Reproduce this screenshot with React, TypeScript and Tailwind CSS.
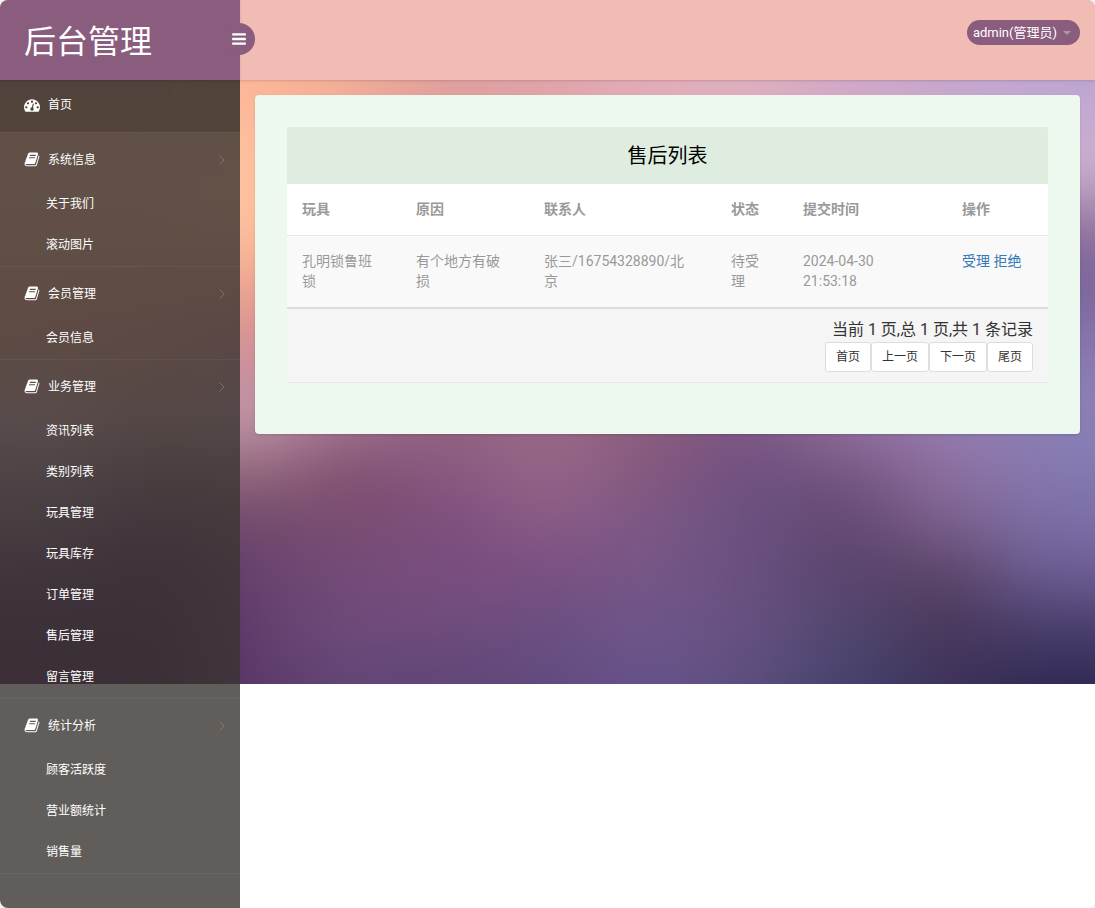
import { FC } from "react";

interface MenuGroup {
  title: string;
  items: string[];
}

const MENU: MenuGroup[] = [
  { title: "系统信息", items: ["关于我们", "滚动图片"] },
  { title: "会员管理", items: ["会员信息"] },
  {
    title: "业务管理",
    items: ["资讯列表", "类别列表", "玩具管理", "玩具库存", "订单管理", "售后管理", "留言管理"],
  },
  { title: "统计分析", items: ["顾客活跃度", "营业额统计", "销售量"] },
];

const COLUMNS = [
  { label: "玩具", width: "w-[114px]" },
  { label: "原因", width: "w-[128px]" },
  { label: "联系人", width: "w-[187px]" },
  { label: "状态", width: "w-[72px]" },
  { label: "提交时间", width: "w-[159px]" },
  { label: "操作", width: "w-[101px]" },
];

const ROWS = [
  {
    toy: "孔明锁鲁班锁",
    reason: "有个地方有破损",
    contact: "张三/16754328890/北京",
    status: "待受理",
    time: "2024-04-30 21:53:18",
  },
];

// colour mesh of the backdrop, 100x50 cells, first row starts at y=50
const MESH = [
  ["#fab496", "#fab496", "#fcb496", "#f2ad96", "#de9e9e", "#e0a4a8", "#e2acb8", "#deafbe", "#d2a8c6", "#c6a6cc", "#bca4d2"],
  ["#fdbca0", "#fdbca0", "#ffbe9c", "#f2ad96", "#de9e9e", "#e0a4a8", "#e2acb8", "#deafbe", "#d2a8c6", "#c8aacc", "#c6acd0"],
  ["#fdbca0", "#fdbca0", "#ffc39e", "#fcb496", "#de9e9e", "#d8a0a8", "#d8a0b0", "#d0a0b8", "#c6a0c0", "#c8aacc", "#c8aecd"],
  ["#fdbca0", "#fdbca0", "#ffc39e", "#f0ac98", "#d0989c", "#c8949c", "#c090a8", "#b890b0", "#b090b8", "#b090b8", "#96789f"],
  ["#f8b498", "#f5b098", "#f4ac92", "#e0a090", "#c89098", "#b88898", "#b088a0", "#a888a8", "#a088b0", "#9080a8", "#7a649a"],
  ["#eca090", "#e89c8c", "#dc9490", "#c89090", "#b88090", "#a87890", "#a07898", "#9878a0", "#9880a8", "#9080b0", "#8470a8"],
  ["#e0a498", "#d89890", "#c890a4", "#b08098", "#a07090", "#a07088", "#907090", "#887098", "#987aa8", "#9478b0", "#8a7db2"],
  ["#d4acc0", "#b89098", "#c098a8", "#a07090", "#905f80", "#9a6a84", "#8c5c7c", "#7c5482", "#94709e", "#967cb0", "#8a80b6"],
  ["#a08098", "#88607a", "#94687c", "#80506f", "#885a80", "#96668a", "#84587f", "#6e5080", "#745480", "#8f6f9f", "#8478b0"],
  ["#7e6080", "#684070", "#704b6c", "#7a4c72", "#7c4d7c", "#8a5a86", "#7c5884", "#6a5080", "#62486f", "#7c608c", "#7c6ea6"],
  ["#603868", "#502860", "#67436c", "#744b78", "#784e7e", "#7a5082", "#765686", "#6a5080", "#58446e", "#5c4466", "#6c5e96"],
  ["#4c245c", "#46205a", "#633f6c", "#6f4b7a", "#704c7c", "#6c4e80", "#70568a", "#665080", "#52466e", "#49385a", "#4c406e"],
  ["#441c50", "#441c50", "#5c3a6a", "#654778", "#624678", "#644c80", "#68548c", "#60507e", "#48446e", "#42345a", "#362e5a"],
  ["#441c50", "#441c50", "#5a3868", "#5e4474", "#5e4474", "#5e4678", "#625086", "#564a7c", "#3c3c70", "#382e58", "#262048"],
];

const Backdrop: FC = () => (
  <svg
    className="absolute top-0 left-0 w-full"
    viewBox="0 0 1100 687"
    preserveAspectRatio="none"
    aria-hidden="true"
  >
    <defs>
      <filter id="soften" filterUnits="userSpaceOnUse" x="-100" y="0" width="1300" height="850" colorInterpolationFilters="sRGB">
        <feGaussianBlur stdDeviation="42 26" />
      </filter>
    </defs>
    <g filter="url(#soften)">
      {MESH.map((row, r) => {
        const first = r === 0;
        const last = r === MESH.length - 1;
        return row.map((color, c) => (
          <rect
            key={`${r}-${c}`}
            x={c === 0 ? -200 : c * 100}
            y={first ? -100 : 50 + r * 50}
            width={c === 0 || c === row.length - 1 ? 301 : 101}
            height={first ? 201 : last ? 250 : 51}
            fill={color}
          />
        ));
      })}
    </g>
  </svg>
);

const DashboardIcon: FC = () => (
  <svg className="size-4 shrink-0" viewBox="0 0 1792 1792" fill="currentColor" aria-hidden="true">
    <path d="M384 1152q0-53-37.5-90.5t-90.5-37.5-90.5 37.5-37.5 90.5 37.5 90.5 90.5 37.5 90.5-37.5 37.5-90.5zm192-448q0-53-37.5-90.5t-90.5-37.5-90.5 37.5-37.5 90.5 37.5 90.5 90.5 37.5 90.5-37.5 37.5-90.5zm428 481l101-382q6-26-7.5-48.5t-38.5-29.5-48 6.5-30 39.5l-101 382q-60 5-107 43.5t-63 98.5q-20 77 20 146t117 89 146-20 89-117q16-60-6-117t-72-91zm660-33q0-53-37.5-90.5t-90.5-37.5-90.5 37.5-37.5 90.5 37.5 90.5 90.5 37.5 90.5-37.5 37.5-90.5zm-640-640q0-53-37.5-90.5t-90.5-37.5-90.5 37.5-37.5 90.5 37.5 90.5 90.5 37.5 90.5-37.5 37.5-90.5zm448 192q0-53-37.5-90.5t-90.5-37.5-90.5 37.5-37.5 90.5 37.5 90.5 90.5 37.5 90.5-37.5 37.5-90.5zm320 448q0 261-141 483-19 29-54 29h-1402q-35 0-54-29-141-221-141-483 0-182 71-348t191-286 286-191 348-71 348 71 286 191 191 286 71 348z" />
  </svg>
);

const BookIcon: FC = () => (
  <svg className="size-4 shrink-0" viewBox="0 64 1792 1792" fill="currentColor" aria-hidden="true">
    <path d="M1703 478q40 57 18 129l-275 906q-19 64-76.5 107.5t-122.5 43.5h-923q-77 0-148.5-53.5t-99.5-131.5q-24-67-2-127 0-4 3-27t4-37q1-8-3-21.5t-3-19.5q2-11 8-21t16.5-23.5 16.5-23.5q23-38 45-91.5t30-91.5q3-10 .5-30t-.5-28q3-11 17-28t17-23q21-36 42-92t25-90q1-9-2.5-32t.5-28q4-13 22-30.5t22-22.5q19-26 42.5-84.5t27.5-96.5q1-8-3-25.5t-2-26.5q2-8 9-18t18-23 17-21q8-12 16.5-30.5t15-35 16-36 19.5-32 26.5-23.5 36-11.5 47.5 5.5l-1 3q38-9 51-9h761q74 0 114 56t18 130l-274 906q-36 119-71.5 153.5t-128.5 34.5h-869q-27 0-38 15-11 16-1 43 24 70 144 70h923q29 0 56-15.5t35-41.5l300-987q7-22 5-57 38 15 59 43zm-1064 2q-4 13 2 22.5t20 9.5h608q13 0 25.5-9.5t16.5-22.5l21-64q4-13-2-22.5t-20-9.5h-608q-13 0-25.5 9.5t-16.5 22.5zm-83 256q-4 13 2 22.5t20 9.5h608q13 0 25.5-9.5t16.5-22.5l21-64q4-13-2-22.5t-20-9.5h-608q-13 0-25.5 9.5t-16.5 22.5z" />
  </svg>
);

const BarsIcon: FC = () => (
  <svg className="size-4" viewBox="0 0 1792 1792" fill="currentColor" aria-hidden="true">
    <path d="M1664 1344v128q0 26-19 45t-45 19h-1408q-26 0-45-19t-19-45v-128q0-26 19-45t45-19h1408q26 0 45 19t19 45zm0-512v128q0 26-19 45t-45 19h-1408q-26 0-45-19t-19-45v-128q0-26 19-45t45-19h1408q26 0 45 19t19 45zm0-512v128q0 26-19 45t-45 19h-1408q-26 0-45-19t-19-45v-128q0-26 19-45t45-19h1408q26 0 45 19t19 45z" />
  </svg>
);

const Sidebar: FC = () => (
  <nav className="flex-1 bg-[#393431]/80 text-xs text-white">
    <a href="#" className="flex h-[53px] items-center gap-2 border-b border-white/10 bg-black/15 pb-[3px] pl-6">
      <DashboardIcon />
      首页
    </a>
    {MENU.map((group) => (
      <section key={group.title} className="border-b border-white/5">
        <button className="flex h-[51px] w-full items-center gap-2 pt-[3px] pr-[14px] pl-6">
          <BookIcon />
          <span>{group.title}</span>
          <svg
            className="ml-auto h-3 w-2 text-[#8c827c]"
            viewBox="0 0 8 12"
            fill="none"
            stroke="currentColor"
            strokeWidth="0.7"
            aria-hidden="true"
          >
            <path d="M1.5 1.5 6 6 1.5 10.5" />
          </svg>
        </button>
        <ul>
          {group.items.map((item) => (
            <li key={item}>
              <a href="#" className="flex h-[41px] items-center pb-px pl-[46px]">
                {item}
              </a>
            </li>
          ))}
        </ul>
      </section>
    ))}
  </nav>
);

const Pager: FC = () => (
  <div className="flex flex-col items-end border-t-2 border-b border-[#dddddd] border-b-[#e4e9e4] bg-[#f5f5f5] px-[15px] py-[10px] text-[#333333]">
    <p className="mb-0.5 text-base leading-[21px]">当前 1 页,总 1 页,共 1 条记录</p>
    <div className="flex">
      {["首页", "上一页", "下一页", "尾页"].map((label) => (
        <button key={label} className="h-[30px] rounded-[3px] border border-[#dddddd] bg-white px-[10px] text-xs">
          {label}
        </button>
      ))}
    </div>
  </div>
);

const App: FC = () => {
  return (
    <div className="bg-gray-100 font-['Roboto','Noto_Sans_CJK_SC',sans-serif]">
      <div className="relative isolate flex min-h-screen overflow-hidden rounded-lg bg-white">
        <div className="absolute inset-0 -z-10">
          <Backdrop />
        </div>

        <aside className="z-10 flex w-60 shrink-0 flex-col">
          <div className="relative flex h-20 items-center bg-[#8a5c7d] pt-1 pl-6 shadow-sm">
            <h1 className="text-[32px] text-white">后台管理</h1>
            <button
              aria-label="菜单"
              className="absolute top-[23px] -right-[15px] flex size-8 items-center justify-center rounded-full bg-[#8a5c7d] text-white"
            >
              <BarsIcon />
            </button>
          </div>
          <Sidebar />
        </aside>

        <div className="min-w-0 flex-1">
          <header className="flex h-20 items-start justify-end bg-[#f1bcb4] px-[15px] pt-5 shadow-sm">
            <button className="flex h-[25px] items-center gap-[6px] rounded-full bg-[#8a5c7d] pr-[9px] pl-[6px] text-[13px] text-white">
              admin(管理员)
              <span className="border-x-4 border-t-4 border-x-transparent border-t-[#a39aae]" />
            </button>
          </header>

          <main className="m-[15px] rounded bg-[#edf8ef] p-8 pb-[51px] shadow-sm">
            <h2 className="rounded-t-xs bg-[#deede0] pt-0.5 text-center text-xl leading-[55px] text-black">售后列表</h2>
            <table className="w-full table-fixed text-left text-sm text-[#999999]">
              <thead>
                <tr className="h-[51px] border-b border-[#e7e7e7] bg-white">
                  {COLUMNS.map((col) => (
                    <th key={col.label} className={`${col.width} pr-5 pl-[15px] font-bold`}>
                      {col.label}
                    </th>
                  ))}
                </tr>
              </thead>
              <tbody>
                {ROWS.map((row) => (
                  <tr key={row.time} className="bg-[#f9f9f9] align-top">
                    <td className="pt-[15px] pr-5 pb-4 pl-[15px]">{row.toy}</td>
                    <td className="pt-[15px] pr-5 pb-4 pl-[15px]">{row.reason}</td>
                    <td className="pt-[15px] pr-5 pb-4 pl-[15px]">{row.contact}</td>
                    <td className="pt-[15px] pr-5 pb-4 pl-[15px]">{row.status}</td>
                    <td className="pt-[15px] pr-5 pb-4 pl-[15px]">{row.time}</td>
                    <td className="pt-[15px] pr-5 pb-4 pl-[15px] text-[#337ab7]">
                      <a href="#">受理</a> <a href="#">拒绝</a>
                    </td>
                  </tr>
                ))}
              </tbody>
            </table>
            <Pager />
          </main>
        </div>
      </div>
    </div>
  );
};

export default App;
